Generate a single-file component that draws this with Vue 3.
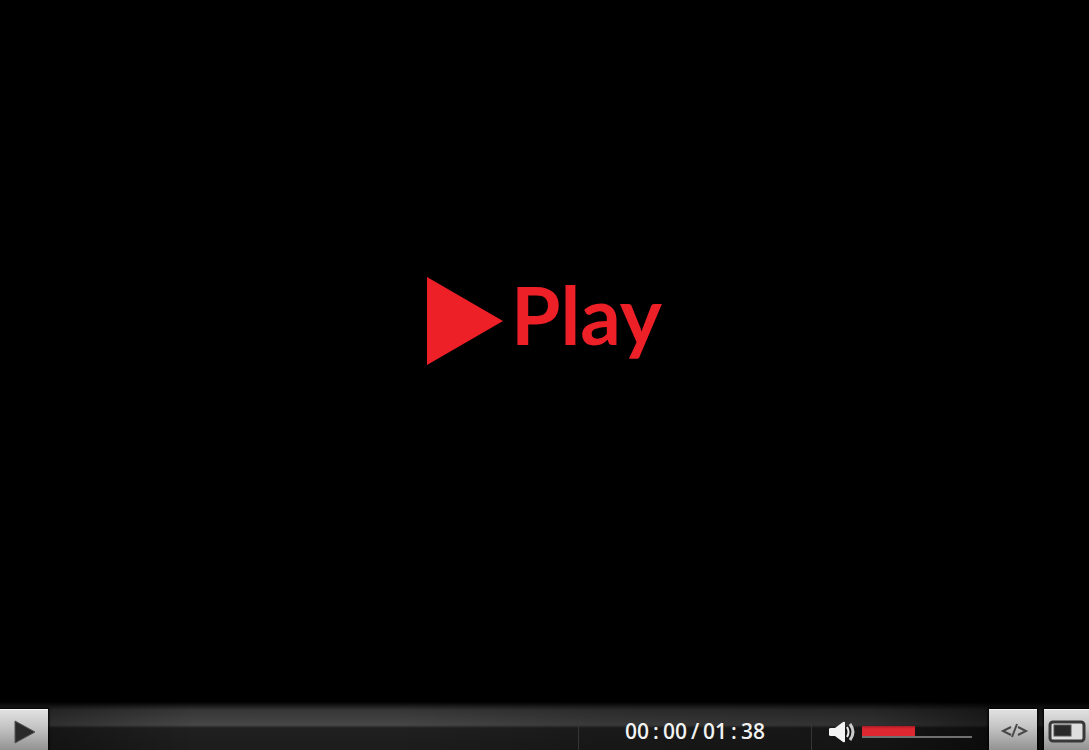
<script setup>
import { ref, computed } from 'vue'

const playing = ref(false)
const position = ref(0)
const volume = ref(48)
const pad = (n) => String(n).padStart(2, '0')
const minutes = computed(() => pad(Math.floor(position.value / 60)))
const seconds = computed(() => pad(position.value % 60))
</script>

<template>
  <main class="player">
    <section class="screen">
      <button class="big-play" type="button" @click="playing = !playing">
        <svg class="triangle" viewBox="0 0 76 88" aria-hidden="true">
          <path d="M0 0L76 44L0 88Z" fill="#ed1f27" />
        </svg>
        <span>Play</span>
      </button>
    </section>

    <footer class="bar">
      <button class="key" type="button" aria-label="Play video" @click="playing = !playing">
        <svg width="48" height="41" viewBox="0 0 48 41" aria-hidden="true">
          <path d="M15 12L35 23L15 34Z" fill="#2a2a2a" stroke="#555" stroke-width="1" />
        </svg>
      </button>
      <input v-model.number="position" class="seek" type="range" min="0" max="98" aria-label="Seek" />
      <div class="time">
        <span>{{ minutes }}</span><span>:</span><span>{{ seconds }}</span><span>/</span><span>01</span><span>:</span><span>38</span>
      </div>
      <div class="sound">
        <svg width="28" height="24" viewBox="0 0 28 24" aria-hidden="true">
          <path d="M1 9Q1 8 3 8H7L15 2Q17 1 17 3V21Q17 23 15 22L7 16H3Q1 16 1 15Z" fill="#f4f4f4" />
          <path d="M19 7Q22 12 19 17" fill="none" stroke="#eee" stroke-width="2" />
          <path d="M22 4Q28 12 22 20" fill="none" stroke="#ccc" stroke-width="3" />
        </svg>
        <div class="level">
          <div class="fill" :style="{ width: volume + '%' }"></div>
          <input v-model.number="volume" type="range" min="0" max="100" aria-label="Volume" />
        </div>
      </div>
      <div class="tools">
        <button class="key" type="button" aria-label="Embed code">
          <svg width="48" height="41" viewBox="0 0 48 41" aria-hidden="true">
            <path d="M22 18L14 22L22 26M29 18L37 22L29 26M28 15L23 28" fill="none" stroke="#484848" stroke-width="2" />
          </svg>
        </button>
        <button class="key" type="button" aria-label="Full screen">
          <svg width="45" height="41" viewBox="0 0 45 41" aria-hidden="true">
            <rect x="6" y="13" width="34" height="19" rx="3" fill="#dedede" stroke="#383838" stroke-width="3" />
            <rect x="10" y="16" width="17" height="11" fill="#292929" stroke="#555" stroke-width="1" />
          </svg>
        </button>
      </div>
    </footer>
  </main>
</template>

<style>
body {
  margin: 0;
  background: #000;
}
</style>

<style scoped>
.player {
  display: flex;
  flex-direction: column;
  min-height: 100vh;
  background: #000;
}
.screen {
  flex: 1;
  display: flex;
  align-items: center;
  justify-content: center;
  padding-bottom: 60px;
  box-sizing: border-box;
}
button {
  border: 0;
  padding: 0;
  cursor: pointer;
}
.big-play {
  display: flex;
  align-items: center;
  gap: 8px;
  background: none;
  color: #ed1f27;
  font: 700 80px/88px Lato, "Open Sans", sans-serif;
}
.triangle {
  width: 76px;
  height: 88px;
}
.big-play span {
  padding-bottom: 14px;
}
.bar {
  display: flex;
  align-items: flex-end;
  height: 48px;
  background:
    linear-gradient(90deg, rgba(0, 0, 0, 0.35) 4%, transparent 18%, transparent 36%, rgba(0, 0, 0, 0.2) 55%, rgba(0, 0, 0, 0.3) 80%, rgba(0, 0, 0, 0.6) 91%),
    linear-gradient(#000, #363636 8px, #474747 23px, #202020 26px, #1c1c1c);
}
.key {
  display: flex;
  flex: none;
  box-sizing: border-box;
  height: 41px;
  background: linear-gradient(#e2e2e2, #c4c4c4 45%, #929292);
  box-shadow: inset 0 1px #f5f5f5, 0 0 2px 1px #000;
}
.seek {
  flex: 1;
  min-width: 0;
  height: 41px;
  margin: 0;
  appearance: none;
  background: none;
}
.seek::-webkit-slider-thumb {
  appearance: none;
  width: 1px;
  height: 1px;
}
.time {
  display: flex;
  box-sizing: border-box;
  flex: none;
  justify-content: center;
  gap: 4px;
  width: 234px;
  height: 26px;
  border: solid #353535;
  border-width: 0 1px;
  color: #f2f2f2;
  font: 600 21px/14px "Open Sans", sans-serif;
}
.sound {
  display: flex;
  flex: none;
  align-items: center;
  gap: 6px;
  height: 36px;
  padding: 0 17px 0 16px;
}
.level {
  position: relative;
  width: 110px;
  height: 10px;
  border-bottom: 2px solid #707070;
}
.fill {
  height: 10px;
  background: linear-gradient(#a81c24, #de2831 30%, #de2831);
}
.level input {
  position: absolute;
  inset: 0;
  width: 100%;
  height: 100%;
  margin: 0;
  opacity: 0;
}
.tools {
  display: flex;
  flex: none;
  gap: 7px;
}
</style>
